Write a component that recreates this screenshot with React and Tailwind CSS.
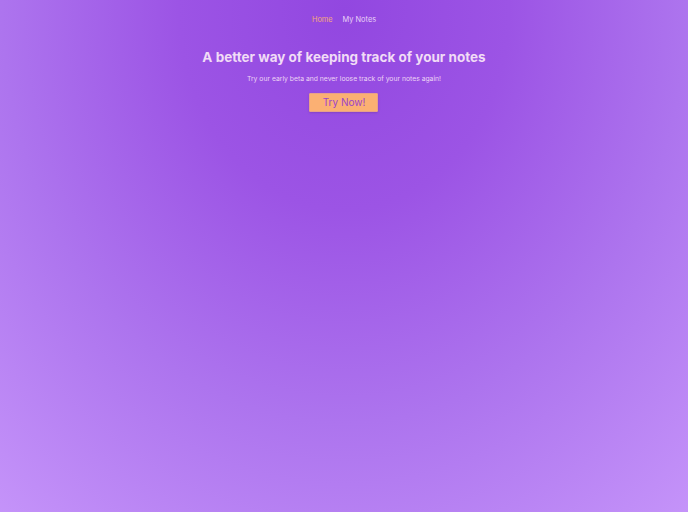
export default function App() {
    return (
        <div
            className="min-h-screen w-full bg-[radial-gradient(ellipse_80%_130%_at_50%_2%,#9247e0_0%,#9c54e5_30%,#ad74ee_62%,#c695fa_100%)] flex flex-col items-center"
            style={{ fontFamily: 'Inter, "Noto Sans", sans-serif' }}
        >
            {/* Nav */}
            <nav className="flex items-center gap-[10px] pt-[14px] text-[7.4px] leading-[12px]">
                <a className="text-[#f3a87c]">Home</a>
                <a className="text-[#e8d2f6]">My Notes</a>
            </nav>

            {/* Hero */}
            <div className="flex flex-col items-center mt-[21px]">
                <h1 className="text-[13.5px] leading-[20px] font-bold text-[#f1dcf6]">
                    A better way of keeping track of your notes
                </h1>
                <p className="mt-[6px] text-[6.8px] leading-[11px] text-[#ecd3f4]">
                    Try our early beta and never loose track of your notes again!
                </p>
                <button className="mt-[9px] w-[69px] h-[19px] bg-[#fbb073] border border-[#e8a08a] rounded-[1px] shadow-sm text-[10px] leading-[17px] text-[#9b45c9]">
                    Try Now!
                </button>
            </div>
        </div>
    );
}
